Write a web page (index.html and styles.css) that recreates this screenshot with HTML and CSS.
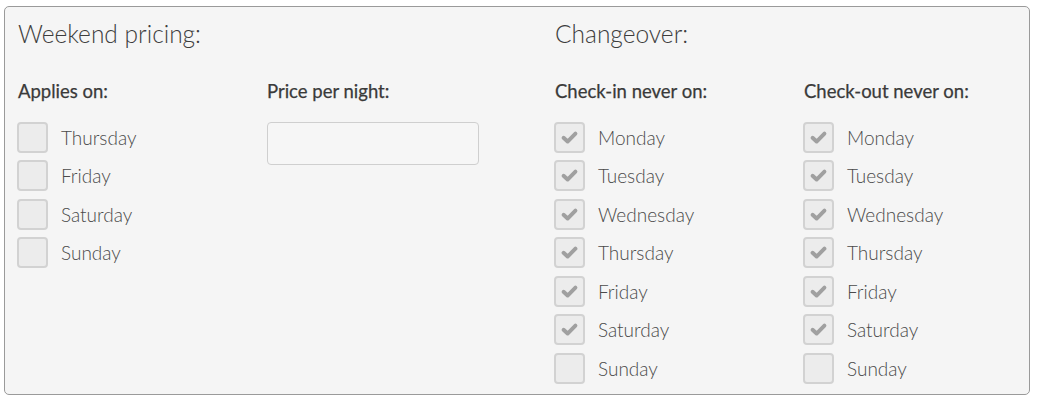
FILE: index.html
```html
<!DOCTYPE html>
<html>
<head>
<meta charset="utf-8">
<link rel="stylesheet" href="styles.css">
</head>
<body>
<div class="panel">
  <div class="half">
    <h2 class="title">Weekend pricing:</h2>
    <div class="cols">
      <div class="col">
        <h3 class="label">Applies on:</h3>
        <ul class="list">
          <li class="item"><span class="box"></span><span class="txt">Thursday</span></li>
          <li class="item"><span class="box"></span><span class="txt">Friday</span></li>
          <li class="item"><span class="box"></span><span class="txt">Saturday</span></li>
          <li class="item"><span class="box"></span><span class="txt">Sunday</span></li>
        </ul>
      </div>
      <div class="col">
        <h3 class="label">Price per night:</h3>
        <div class="input"></div>
      </div>
    </div>
  </div>
  <div class="half">
    <h2 class="title">Changeover:</h2>
    <div class="cols">
      <div class="col">
        <h3 class="label">Check-in never on:</h3>
        <ul class="list">
          <li class="item"><span class="box on"><svg viewBox="0 0 16 16"><path d="M3 8.2 L6.4 11.4 L13 4.8"/></svg></span><span class="txt">Monday</span></li>
          <li class="item"><span class="box on"><svg viewBox="0 0 16 16"><path d="M3 8.2 L6.4 11.4 L13 4.8"/></svg></span><span class="txt">Tuesday</span></li>
          <li class="item"><span class="box on"><svg viewBox="0 0 16 16"><path d="M3 8.2 L6.4 11.4 L13 4.8"/></svg></span><span class="txt">Wednesday</span></li>
          <li class="item"><span class="box on"><svg viewBox="0 0 16 16"><path d="M3 8.2 L6.4 11.4 L13 4.8"/></svg></span><span class="txt">Thursday</span></li>
          <li class="item"><span class="box on"><svg viewBox="0 0 16 16"><path d="M3 8.2 L6.4 11.4 L13 4.8"/></svg></span><span class="txt">Friday</span></li>
          <li class="item"><span class="box on"><svg viewBox="0 0 16 16"><path d="M3 8.2 L6.4 11.4 L13 4.8"/></svg></span><span class="txt">Saturday</span></li>
          <li class="item"><span class="box"></span><span class="txt">Sunday</span></li>
        </ul>
      </div>
      <div class="col">
        <h3 class="label">Check-out never on:</h3>
        <ul class="list">
          <li class="item"><span class="box on"><svg viewBox="0 0 16 16"><path d="M3 8.2 L6.4 11.4 L13 4.8"/></svg></span><span class="txt">Monday</span></li>
          <li class="item"><span class="box on"><svg viewBox="0 0 16 16"><path d="M3 8.2 L6.4 11.4 L13 4.8"/></svg></span><span class="txt">Tuesday</span></li>
          <li class="item"><span class="box on"><svg viewBox="0 0 16 16"><path d="M3 8.2 L6.4 11.4 L13 4.8"/></svg></span><span class="txt">Wednesday</span></li>
          <li class="item"><span class="box on"><svg viewBox="0 0 16 16"><path d="M3 8.2 L6.4 11.4 L13 4.8"/></svg></span><span class="txt">Thursday</span></li>
          <li class="item"><span class="box on"><svg viewBox="0 0 16 16"><path d="M3 8.2 L6.4 11.4 L13 4.8"/></svg></span><span class="txt">Friday</span></li>
          <li class="item"><span class="box on"><svg viewBox="0 0 16 16"><path d="M3 8.2 L6.4 11.4 L13 4.8"/></svg></span><span class="txt">Saturday</span></li>
          <li class="item"><span class="box"></span><span class="txt">Sunday</span></li>
        </ul>
      </div>
    </div>
  </div>
</div>
</body>
</html>
```

FILE: styles.css
```css
html, body {
  margin: 0;
  padding: 0;
  background: #ffffff;
}
body {
  padding: 6px 8px 0 4px;
  font-family: "Lato", "Open Sans", sans-serif;
  color: #444;
}
.panel {
  display: grid;
  grid-template-columns: 537px 1fr;
  box-sizing: border-box;
  width: 1026px;
  height: 389px;
  padding: 0 13px;
  background: #f5f5f5;
  border: 1px solid #9a9a9a;
  border-radius: 5px;
}
.title {
  margin: 12px 0 0 0;
  font-size: 24.5px;
  line-height: 30px;
  font-weight: 300;
  color: #3d3d3d;
}
.cols {
  display: grid;
  grid-template-columns: 249px 1fr;
}
.label {
  margin: 31px 0 0 0;
  font-size: 18.5px;
  line-height: 22px;
  font-weight: 400;
  color: #3a3a3a;
  -webkit-text-stroke: 0.25px #3a3a3a;
}
.list {
  list-style: none;
  margin: 16px 0 0 -1px;
  padding: 0;
}
.item {
  display: flex;
  align-items: center;
  height: 38.5px;
}
.box {
  box-sizing: border-box;
  width: 31px;
  height: 31px;
  flex: none;
  border: 2px solid #d2d2d2;
  border-radius: 4px;
  background: #ececec;
  display: flex;
  align-items: center;
  justify-content: center;
}
.box svg {
  width: 19px;
  height: 19px;
}
.box svg path {
  fill: none;
  stroke: #a0a0a0;
  stroke-width: 3.3;
  stroke-linecap: round;
  stroke-linejoin: round;
}
.txt {
  margin-left: 13px;
  font-size: 19px;
  font-weight: 300;
  color: #4a4a4a;
}
.input {
  box-sizing: border-box;
  margin-top: 20px;
  width: 212px;
  height: 43px;
  border: 1px solid #cfcfcf;
  border-radius: 4px;
  background: #f6f6f6;
}
```
